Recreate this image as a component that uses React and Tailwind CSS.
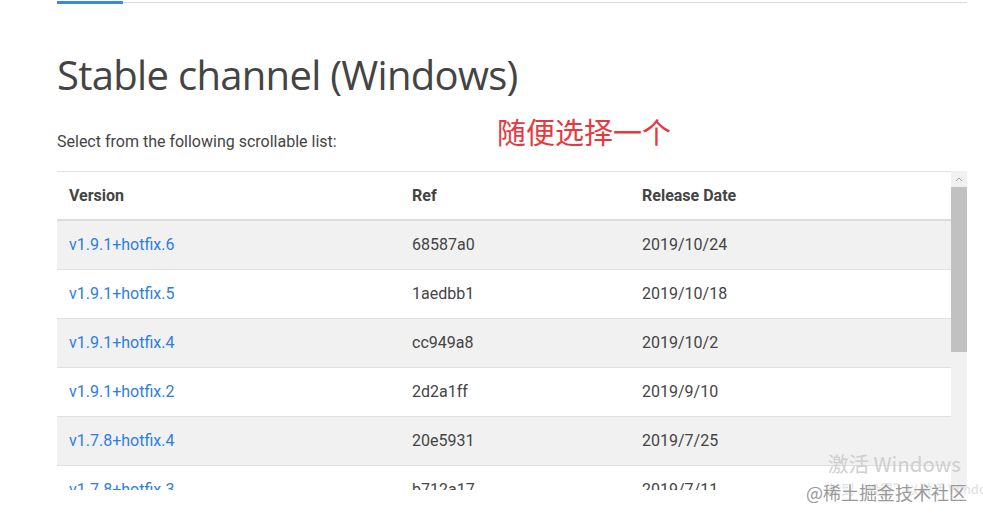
const rows = [
  ["v1.9.1+hotfix.6", "68587a0", "2019/10/24"],
  ["v1.9.1+hotfix.5", "1aedbb1", "2019/10/18"],
  ["v1.9.1+hotfix.4", "cc949a8", "2019/10/2"],
  ["v1.9.1+hotfix.2", "2d2a1ff", "2019/9/10"],
  ["v1.7.8+hotfix.4", "20e5931", "2019/7/25"],
  ["v1.7.8+hotfix.3", "b712a17", "2019/7/11"],
];

export default function App() {
  return (
    <div className="relative w-[983px] h-[519px] overflow-hidden bg-white font-['Roboto',sans-serif] text-[#444]">
      <div className="ml-[57px] w-[910px] pt-[1px]">
        <div className="relative h-[3px]">
          <div className="absolute left-0 right-0 top-[1px] h-[1px] bg-[#dadce0]" />
          <div className="absolute left-0 top-0 h-[3px] w-[66px] bg-[#3b8ad4]" />
        </div>

        <h1 className="mt-[46px] h-[50px] text-[40px] leading-[50px] font-['Open_Sans',sans-serif] font-normal tracking-[-0.7px] text-[#444]">
          Stable channel (Windows)
        </h1>

        <div className="relative mt-[27px] h-[30px]">
          <p className="pt-[3px] text-[16px] leading-[24px] text-[#444]">
            Select from the following scrollable list:
          </p>
          <span className="absolute left-[440px] top-[-14px] text-[29px] leading-[36px] text-[#e8383d] font-['Noto_Sans_CJK_SC',sans-serif]">
            随便选择一个
          </span>
        </div>

        <div className="mt-[14px] flex h-[319px] w-[910px] overflow-hidden">
          <div className="w-[894px] border-t border-[#e0e0e0]">
            <div className="flex h-[49px] items-center border-b-2 border-[#dcdcdc] text-[16px] font-bold text-[#444]">
              <div className="w-[343px] pl-[12px]">Version</div>
              <div className="w-[230px] pl-[12px]">Ref</div>
              <div className="pl-[12px]">Release Date</div>
            </div>
            {rows.map((r, i) => (
              <div
                key={r[0]}
                className={
                  "flex h-[49px] items-center border-b border-[#e0e0e0] text-[16px] " +
                  (i % 2 === 0 ? "bg-[#f1f1f1]" : "bg-white")
                }
              >
                <div className="w-[343px] pl-[12px] text-[#2d7ee0]">{r[0]}</div>
                <div className="w-[230px] pl-[12px]">{r[1]}</div>
                <div className="pl-[12px]">{r[2]}</div>
              </div>
            ))}
          </div>
          <div className="flex w-[16px] flex-col bg-[#f1f1f1]">
            <div className="flex h-[16px] items-center justify-center">
              <svg width="8" height="5" viewBox="0 0 8 5">
                <path d="M1 4 L4 1 L7 4" fill="none" stroke="#a3a3a3" strokeWidth="1" />
              </svg>
            </div>
            <div className="h-[165px] bg-[#c1c1c1]" />
          </div>
        </div>
      </div>

      <div className="absolute left-[828px] top-[450px] text-[20.5px] leading-[26px] text-[#cfcfcf] font-['Noto_Sans_CJK_SC',sans-serif]">
        激活 Windows
      </div>
      <div className="absolute left-[828px] top-[480px] text-[13px] leading-[18px] text-[#dedede] font-['Noto_Sans_CJK_SC',sans-serif] whitespace-nowrap">
        转到“设置”以激活 Windows。
      </div>
      <div className="absolute left-[806px] top-[479px] text-[18px] leading-[26px] text-[#9a9a9a] font-['Noto_Sans_CJK_SC',sans-serif] [text-shadow:0_0_2px_#fff]">
        @稀土掘金技术社区
      </div>
    </div>
  );
}
